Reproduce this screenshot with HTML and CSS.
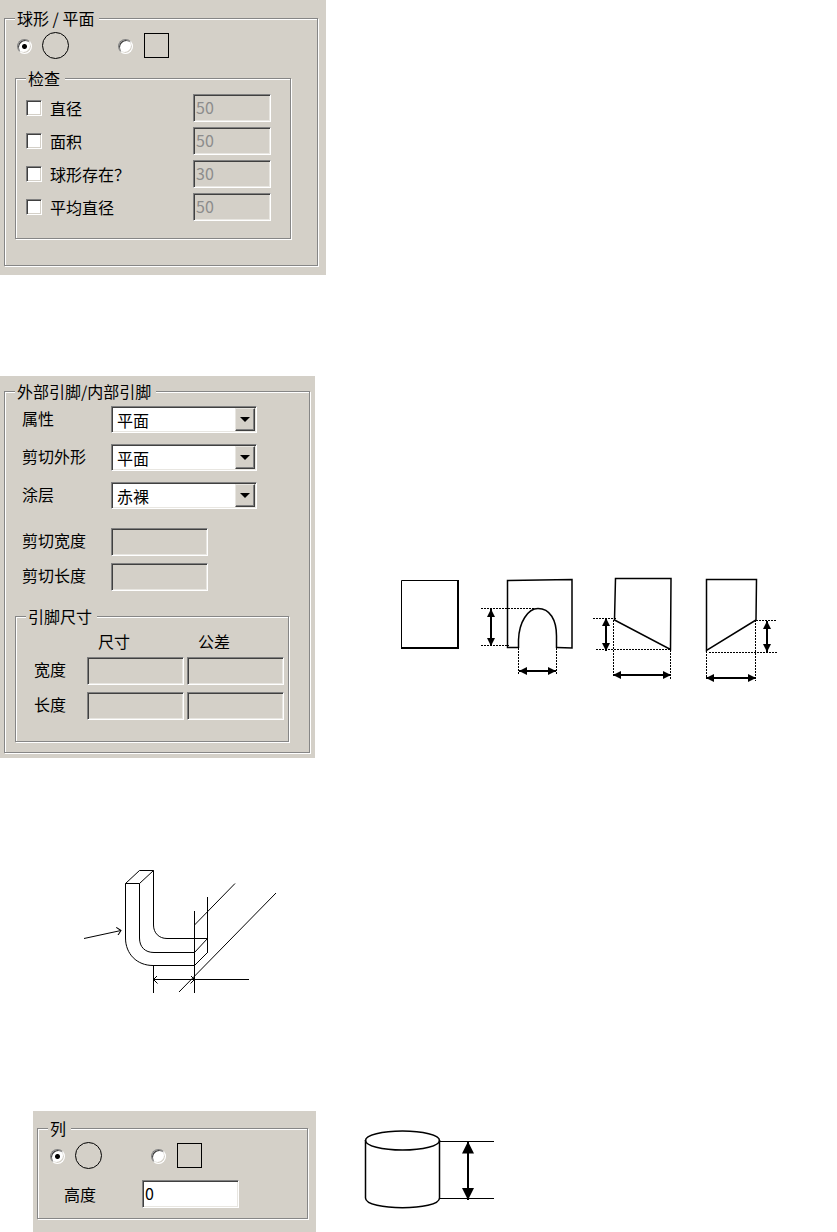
FILE: index.html
```html
<!DOCTYPE html>
<html lang="zh-CN">
<head>
    <meta charset="UTF-8">
    <meta name="viewport" content="width=device-width, initial-scale=1.0">
    <title>引脚设置</title>
    <link rel="stylesheet" href="styles.css">
</head>
<body>
    <main class="page">
        <section class="panel panel-ball">
            <fieldset class="group">
                <legend>球形 / 平面</legend>
                <div class="shapes">
                    <label class="shape">
                        <input type="radio" name="ball" aria-label="球形" checked>
                        <svg width="28" height="28" viewBox="0 0 28 28"><circle cx="13.5" cy="13.5" r="13"/></svg>
                    </label>
                    <label class="shape">
                        <input type="radio" name="ball" aria-label="平面">
                        <svg width="28" height="28" viewBox="0 0 28 28"><rect x="1.5" y="1.5" width="24" height="24"/></svg>
                    </label>
                </div>
                <fieldset class="group checks">
                    <legend>检查</legend>
                    <div class="check-row">
                        <label><input type="checkbox">直径</label>
                        <input class="field" type="text" value="50" aria-label="直径" disabled>
                    </div>
                    <div class="check-row">
                        <label><input type="checkbox">面积</label>
                        <input class="field" type="text" value="50" aria-label="面积" disabled>
                    </div>
                    <div class="check-row">
                        <label><input type="checkbox">球形存在？</label>
                        <input class="field" type="text" value="30" aria-label="球形存在" disabled>
                    </div>
                    <div class="check-row">
                        <label><input type="checkbox">平均直径</label>
                        <input class="field" type="text" value="50" aria-label="平均直径" disabled>
                    </div>
                </fieldset>
            </fieldset>
        </section>

        <div class="row">
            <section class="panel panel-lead">
                <fieldset class="group">
                    <legend>外部引脚/内部引脚</legend>
                    <div class="form selects">
                        <label for="attr">属性</label>
                        <div class="combo">
                            <select id="attr"><option>平面</option></select>
                            <span class="arrow"></span>
                        </div>
                        <label for="cut">剪切外形</label>
                        <div class="combo">
                            <select id="cut"><option>平面</option></select>
                            <span class="arrow"></span>
                        </div>
                        <label for="coat">涂层</label>
                        <div class="combo">
                            <select id="coat"><option>赤裸</option></select>
                            <span class="arrow"></span>
                        </div>
                    </div>
                    <div class="form cuts">
                        <label for="cut-w">剪切宽度</label>
                        <input class="field" id="cut-w" type="text" disabled>
                        <label for="cut-l">剪切长度</label>
                        <input class="field" id="cut-l" type="text" disabled>
                    </div>
                    <fieldset class="group sizes">
                        <legend>引脚尺寸</legend>
                        <div class="size-grid">
                            <span></span>
                            <span class="head">尺寸</span>
                            <span class="head">公差</span>
                            <label for="w-size">宽度</label>
                            <input class="field" id="w-size" type="text" disabled>
                            <input class="field" type="text" aria-label="宽度公差" disabled>
                            <label for="l-size">长度</label>
                            <input class="field" id="l-size" type="text" disabled>
                            <input class="field" type="text" aria-label="长度公差" disabled>
                        </div>
                    </fieldset>
                </fieldset>
            </section>

            <svg class="drawing cut-shapes" width="390" height="120" viewBox="395 570 390 120">
                <defs>
                    <marker id="solid" markerUnits="userSpaceOnUse" markerWidth="8" markerHeight="8" refX="8" refY="4" orient="auto-start-reverse">
                        <path class="head-fill" d="M0 0L8 4L0 8Z"/>
                    </marker>
                    <marker id="solid-big" markerUnits="userSpaceOnUse" markerWidth="12" markerHeight="12" refX="12" refY="6" orient="auto-start-reverse">
                        <path class="head-fill" d="M0 0L12 6L0 12Z"/>
                    </marker>
                    <marker id="open" markerUnits="userSpaceOnUse" markerWidth="6" markerHeight="8" refX="5" refY="4" orient="auto-start-reverse">
                        <path class="thin" d="M1 0L5 4L1 8"/>
                    </marker>
                </defs>
                <!-- square -->
                <path class="thin" d="M401.5 648V580.5H458"/>
                <path class="thick" d="M458 580V648H401"/>
                <!-- arch -->
                <path class="line" d="M518.5 647.5H507.5V580.5L572 579.5V648L557 647.5"/>
                <path class="line" d="M518.5 648V640C519 622 528 608.5 538 608.5C550 608.5 556.5 620 556.5 636V648"/>
                <path class="dots" d="M481 608.5H535M481 645.5H509M518.5 648V675M556.5 648V675"/>
                <path class="dim" d="M491 609V646"/>
                <path class="dim" d="M519 671H556"/>
                <!-- slope down -->
                <path class="line" d="M615.5 578.5H671L670.5 649.5L614.5 620Z"/>
                <path class="dots" d="M593 618.5H616M596 649.5H670M613.5 620V677M670.5 650V679"/>
                <path class="dim" d="M606 618V651"/>
                <path class="dim" d="M613 675H671"/>
                <!-- slope up -->
                <path class="line" d="M706.5 579.5H756.5L756 620L706.5 650.5Z"/>
                <path class="dots" d="M756 620.5H777M709 652.5H778M706.5 651V679M755.5 620V681"/>
                <path class="dim" d="M767 621V652"/>
                <path class="dim" d="M706 678H756"/>
            </svg>
        </div>

        <svg class="drawing lead" width="200" height="130" viewBox="80 866 200 130">
            <path class="thin" d="M125.5 883.5H139.5L153.5 870.5H139.5Z"/>
            <path class="thin" d="M125.5 883.5V938C125.5 954 137 965.5 153 965.5H194.5"/>
            <path class="thin" d="M139.5 883.5V938C139.5 947 145 952.5 154 952.5H194.5"/>
            <path class="thin" d="M153.5 870.5V925C153.5 933 159 938.5 167 938.5H207.5"/>
            <path class="thin" d="M194.5 952.5L207.5 938.5M194.5 965.5L207.5 952.5"/>
            <path class="thin" d="M194.5 911V993M207.5 897V953M153.5 965V993"/>
            <path class="thin" d="M194.5 925L235 883.5M276 893L179 992M194 979.5H249"/>
            <path class="thin arrows" d="M153.5 979.5H194.5"/>
            <path class="thin arrow-end" d="M84 938.5L121 930.5"/>
        </svg>

        <div class="row row-column">
            <section class="panel panel-column">
                <fieldset class="group">
                    <legend>列</legend>
                    <div class="shapes">
                        <label class="shape">
                            <input type="radio" name="column" aria-label="圆形" checked>
                            <svg width="28" height="28" viewBox="0 0 28 28"><circle cx="13.5" cy="13.5" r="13"/></svg>
                        </label>
                        <label class="shape">
                            <input type="radio" name="column" aria-label="方形">
                            <svg width="28" height="28" viewBox="0 0 28 28"><rect x="1.5" y="1.5" width="24" height="24"/></svg>
                        </label>
                    </div>
                    <div class="height">
                        <label for="height">高度</label>
                        <input class="field" id="height" type="text" value="0">
                    </div>
                </fieldset>
            </section>

            <svg class="drawing cylinder" width="136" height="84" viewBox="362 1128 136 84">
                <ellipse class="line" cx="402.5" cy="1140.5" rx="37" ry="9.5"/>
                <path class="line" d="M365.5 1140V1198C365.5 1211 439.5 1211 439.5 1198V1140"/>
                <path class="thin" d="M439.5 1141.5H494M439.5 1198.5H494"/>
                <path class="dim-big" d="M468 1141.5V1200"/>
            </svg>
        </div>
    </main>
</body>
</html>
```
FILE: styles.css
```css
* {
    box-sizing: border-box;
}
body {
    margin: 0;
    background: #fff;
    color: #000;
    font-family: "Noto Sans CJK SC", sans-serif;
    font-size: 16px;
    line-height: 18px;
}
.page {
    display: flex;
    flex-direction: column;
    align-items: flex-start;
}
.row {
    display: flex;
    align-items: flex-start;
    margin-top: 101px;
}
.row-column {
    margin: 115px 0 0 33px;
}

/* panels */
.panel {
    background: #d4d0c8;
}
.panel-ball {
    width: 326px;
    max-width: 100%;
    padding: 9px 8px 9px 4px;
}
.panel-lead {
    width: 315px;
    padding: 6px 5px 5px 4px;
}
.panel-column {
    width: 283px;
    padding: 8px 8px 13px 4px;
}
.group {
    min-width: 0;
    margin: 0;
    padding: 0 10px 10px;
    border: 1px solid #868686;
    box-shadow: 1px 1px #fff, inset 1px 1px #fff;
}
.panel-ball > .group {
    padding: 0 26px 26px 10px;
}
legend {
    padding: 0 5px 0 2px;
    background: #d4d0c8;
}

/* radios with shapes */
.shapes {
    display: grid;
    grid-template-columns: 101px 1fr;
    padding: 5px 0 0 2px;
}
.shape {
    display: flex;
    align-items: center;
    gap: 10px;
}
.shape svg {
    fill: none;
    stroke: #000;
}
input[type="radio"],
input[type="checkbox"] {
    appearance: none;
    margin: 0;
    background: #fff;
    border: 1px solid;
    border-color: #808080 #fff #fff #808080;
    box-shadow: inset 1px 1px #404040, inset -1px -1px #d4d0c8;
}
input[type="radio"] {
    width: 15px;
    height: 15px;
    border-radius: 50%;
}
input[type="radio"]:checked {
    background: radial-gradient(circle, #000 2px, #fff 3px);
}
input[type="checkbox"] {
    width: 16px;
    height: 16px;
}
input[type="checkbox"]:checked {
    background: #000;
}

/* text boxes */
.field {
    width: 97px;
    height: 28px;
    padding: 0 2px 3px;
    border: 1px solid;
    border-color: #808080 #fff #fff #808080;
    border-radius: 0;
    box-shadow: inset 1px 1px #404040, inset -1px -1px #e8e6e1;
    background: #fff;
    font: inherit;
}
.field:disabled {
    background: #d4d0c8;
    color: #8c8c8c;
}

.checks {
    margin-top: 9px;
    padding: 7px 19px 17px 10px;
}
.check-row {
    display: flex;
    justify-content: space-between;
    align-items: center;
}
.check-row + .check-row {
    margin-top: 5px;
}
.check-row label {
    display: flex;
    align-items: center;
    gap: 8px;
}
.check-row .field {
    width: 78px;
}

/* lead form */
.form {
    display: grid;
    grid-template-columns: 89px 1fr;
    align-items: center;
    padding-left: 7px;
}
.form label,
.size-grid label {
    padding-bottom: 4px;
}
.selects {
    row-gap: 11px;
    padding-top: 6px;
}
.cuts {
    row-gap: 7px;
    margin-top: 19px;
}
.combo {
    display: grid;
    grid-template-columns: 1fr 20px;
    width: 146px;
    height: 27px;
    padding: 1px;
    border: 1px solid;
    border-color: #808080 #fff #fff #808080;
    box-shadow: inset 1px 1px #404040, inset -1px -1px #e8e6e1;
    background: #fff;
}
.combo select {
    grid-area: 1 / 1 / 2 / 3;
    appearance: none;
    padding: 0 4px;
    border: none;
    background: none;
    color: #000;
    font: inherit;
}
.combo .arrow {
    grid-area: 1 / 2;
    display: grid;
    place-items: center;
    border: 1px solid;
    border-color: #e8e6e1 #404040 #404040 #e8e6e1;
    box-shadow: inset -1px -1px #808080;
    background: #d4d0c8;
    pointer-events: none;
}
.arrow::before {
    content: "";
    border: 5px solid transparent;
    border-top-color: #000;
    border-bottom: none;
}
.sizes {
    margin: 16px 10px 0 0;
    padding: 7px 4px 21px 10px;
}
.size-grid {
    display: grid;
    grid-template-columns: 58px 97px 97px;
    gap: 7px 3px;
    align-items: center;
}
.size-grid label {
    padding-left: 8px;
}
.size-grid .head {
    padding-left: 11px;
}

.height {
    display: grid;
    grid-template-columns: 78px 1fr;
    align-items: center;
    padding: 10px 0 0 16px;
}

/* drawings */
.drawing {
    display: block;
    flex: none;
    fill: none;
    stroke: #000;
}
.cut-shapes {
    margin: 194px 0 0 80px;
}
.lead {
    margin: 108px 0 0 80px;
}
.cylinder {
    margin: 17px 0 0 46px;
}
.thin {
    stroke-width: 1;
}
.line {
    stroke-width: 1.5;
}
.thick {
    stroke-width: 2;
}
.dots {
    stroke-dasharray: 2 1;
}
.dim {
    stroke-width: 2;
    marker-start: url(#solid);
    marker-end: url(#solid);
}
.dim-big {
    stroke-width: 2;
    marker-start: url(#solid-big);
    marker-end: url(#solid-big);
}
.arrows {
    marker-start: url(#open);
    marker-end: url(#open);
}
.arrow-end {
    marker-end: url(#open);
}
.head-fill {
    fill: #000;
    stroke: none;
}
```
